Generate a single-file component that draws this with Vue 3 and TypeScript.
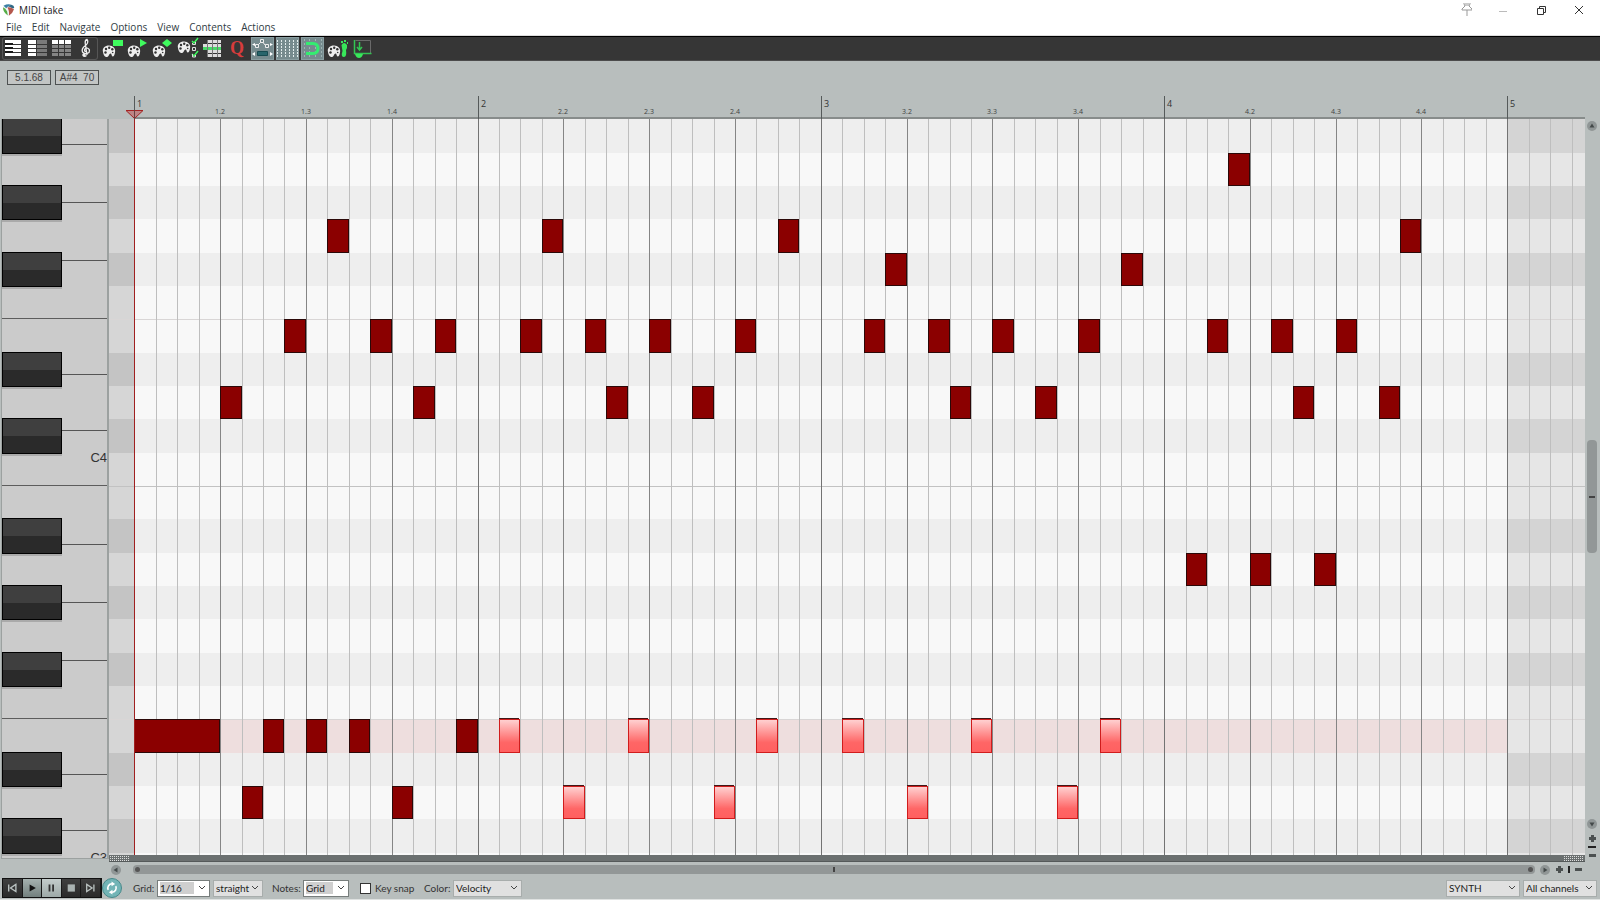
<script setup lang="ts">
import { ref } from 'vue'

interface Note { step: number; pitch: number; length: number; selected: boolean }
interface Key { pitch: number; top: number; height: number; black: boolean }

const menus = ['File', 'Edit', 'Navigate', 'Options', 'View', 'Contents', 'Actions']

/* Vertical scale: pitch 60 is C4, and its lower edge is the reference line. */
const C4_BOTTOM = 367
const edge = (pitch: number) => Math.round(C4_BOTTOM - ((pitch - 60) * 100) / 3)
const isBlack = (pitch: number) => [1, 3, 6, 8, 10].includes(pitch % 12)

const rows: Key[] = []
for (let pitch = 70; pitch >= 48; pitch--) {
  rows.push({ pitch, top: edge(pitch + 1), height: edge(pitch) - edge(pitch + 1), black: isBlack(pitch) })
}
const blackKeys = rows.filter((r) => r.black)
const octaveLines = [65, 60, 53].map(edge)
const keyLines = [25, 83, 141, 255, 311, 425, 483, 541, 655, 711]

/* Horizontal scale: one step is a sixteenth. */
const ORIGIN = 25
const stepX = (step: number) => ORIGIN + Math.round((step * 1373) / 64 + 0.3)
const END = stepX(64)
const gridSteps = Array.from({ length: 160 }, (_, i) => i + 1)
const lineClass = (s: number) => (s % 16 === 0 ? 'bar' : s % 4 === 0 ? 'beat' : 'sixteenth')
const bars = Array.from({ length: 5 }, (_, i) => i)
const beats = Array.from({ length: 16 }, (_, i) => i).filter((i) => i % 4 !== 0)

const make = (pitch: number, steps: number[], selected = false, length = 1): Note[] =>
  steps.map((step) => ({ step, pitch, length, selected }))

const notes: Note[] = [
  ...make(69, [51]),
  ...make(67, [9, 19, 30, 59]),
  ...make(66, [35, 46]),
  ...make(64, [7, 11, 14, 18, 21, 24, 28, 34, 37, 40, 44, 50, 53, 56]),
  ...make(62, [4, 13, 22, 26, 38, 42, 54, 58]),
  ...make(57, [49, 52, 55]),
  ...make(52, [0], false, 4),
  ...make(52, [6, 8, 10, 15]),
  ...make(52, [17, 23, 29, 33, 39, 45], true),
  ...make(50, [5, 12]),
  ...make(50, [20, 27, 36, 43], true),
]

const tools = [
  { id: 'piano', label: 'Piano roll view' },
  { id: 'named', label: 'Named notes view' },
  { id: 'events', label: 'Event list view' },
  { id: 'notation', label: 'Notation view' },
  { id: 'colorRect', label: 'Rectangle notes' },
  { id: 'colorTri', label: 'Triangle notes' },
  { id: 'colorDia', label: 'Diamond notes' },
  { id: 'filter', label: 'Filter events' },
  { id: 'tracks', label: 'Track list' },
  { id: 'quantize', label: 'Quantize' },
  { id: 'cc', label: 'CC selection follows notes' },
  { id: 'grid', label: 'Show grid' },
  { id: 'snap', label: 'Snap to grid' },
  { id: 'step', label: 'Step input' },
  { id: 'dock', label: 'Dock editor' },
]
const views = tools.slice(0, 4)
const actions = tools.slice(4)
const active = ref<string[]>(['cc', 'grid', 'snap'])
const toggle = (id: string) => {
  active.value = active.value.includes(id) ? active.value.filter((a) => a !== id) : [...active.value, id]
}
const keySnap = ref(false)
</script>

<template>
  <div class="window">
    <header class="titlebar">
      <svg class="logo" viewBox="0 0 14 14" aria-hidden="true">
        <path d="M7 .5 12.5 2.5 13 6 7 13.5 1 6 1.5 2.5Z" fill="#f2f5f5" />
        <path d="M1.600 2.300Q6 .2 10 1.300Q6 2.600 4.600 5Z" fill="#3a7fa5" />
        <path d="M10 1.300Q13 2 13.200 4.200Q12.600 5.400 11 5.200Q8.500 3.400 6.300 3Z" fill="#2e6886" />
        <path d="M1 4Q4 5 5.500 8.500L6.300 13Q1.200 9.500 1 4Z" fill="#55ad46" />
        <path d="M5.800 4.300Q9 3.400 12.900 6.300Q11.500 11 7.400 13.300Q8.200 7.800 5.800 4.300Z" fill="#b4574d" />
      </svg>
      <h1>MIDI take</h1>
      <div class="controls">
        <button aria-label="Pin">
          <svg viewBox="-2 2 14 14"><path d="M4 0v3l1 2-3 3v1h10V8L9 5l1-2V0M7 9v6M6 0v5M8 0v5" fill="none" stroke="#999" /></svg>
        </button>
        <button aria-label="Minimize">
          <svg viewBox="0 0 14 14"><path d="M3 7.500h8" stroke="#bbb" fill="none" /></svg>
        </button>
        <button aria-label="Restore">
          <svg viewBox="0 0 14 14"><path d="M3.500 4.500h6v6h-6zM5.500 4V2.500h6v6H10" fill="none" stroke="#333" /></svg>
        </button>
        <button aria-label="Close">
          <svg viewBox="0 0 14 14"><path d="m3 2 8 8m0-8-8 8" fill="none" stroke="#333" /></svg>
        </button>
      </div>
    </header>

    <nav class="menubar">
      <button v-for="m in menus" :key="m">{{ m }}</button>
    </nav>

    <div class="toolbar" role="toolbar">
      <div v-for="(set, g) in [views, actions]" :key="g" :class="g === 0 ? 'views' : 'actions'">
        <button
          v-for="t in set"
          :key="t.id"
          :aria-label="t.label"
          :class="{ active: active.includes(t.id) }"
          @click="toggle(t.id)"
        >
          <svg viewBox="0 0 23 23" aria-hidden="true">
            <g v-if="t.id === 'piano'">
              <path d="M3 3h16v4H3zM3 8h16v3H3zM3 12h16v3H3zM3 16h16v3H3z" fill="#fff" />
              <path d="M3 6h8v2H3zM3 10h8v2H3zM3 14h8v2H3z" fill="#181818" />
            </g>
            <g v-else-if="t.id === 'named'">
              <path d="M2 3h8v4H2zM2 8h8v3H2zM2 12h8v3H2zM2 16h8v3H2z" fill="#fff" />
              <path d="M11 3h10v4H11zM11 8h10v3H11zM11 12h10v3H11zM11 16h10v3H11z" fill="#7a7a7a" />
            </g>
            <g v-else-if="t.id === 'events'">
              <path d="M2 3h6v4H2zM9 3h5v4H9zM15 3h6v4h-6z" fill="#fff" />
              <path d="M2 8h6v3H2zM9 8h5v3H9zM15 8h6v3h-6zM2 12h6v3H2zM9 12h5v3H9zM15 12h6v3h-6zM2 16h6v3H2zM9 16h5v3H9zM15 16h6v3h-6z" fill="#858585" />
            </g>
            <g v-else-if="t.id === 'notation'" fill="none" stroke="#eee" stroke-width="1.300">
              <path d="M12.500 18.500Q10 20.500 9 17.500M13 18 11.200 6Q11 3 13 2.500Q15 5 12 8Q7 11.500 8.500 15Q11 18 15 15.500Q16.500 12 13 11Q10 11.300 10.700 14L12.500 15" />
              <circle cx="10" cy="18" r="1" fill="#eee" />
            </g>
            <g v-else-if="['colorRect', 'colorTri', 'colorDia', 'step', 'filter'].includes(t.id)">
              <g :class="{ raised: t.id === 'filter' }">
                <path d="M2 15C1 11 4 8.500 8 8.500s7 3 6 7c-.5 3-1.500 4.500-2.500 4-1.500-1-.5-3-2-3s-1.500 4-4.500 3.500C3 19.500 2.300 17 2 15Z" fill="#eee" />
                <g fill="#333">
                  <circle cx="5" cy="12" r="1.200" /><circle cx="8.200" cy="10.700" r="1.200" />
                  <circle cx="11.300" cy="12.300" r="1.200" /><circle cx="4.500" cy="15.500" r="1.200" />
                  <circle cx="11.700" cy="15.500" r=".8" />
                </g>
              </g>
              <path v-if="t.id === 'colorRect'" d="M12 3h10v6H12z" fill="#3ffb5e" />
              <path v-if="t.id === 'colorTri'" d="m14 2 7 4-7 4z" fill="#3ffb5e" />
              <path v-if="t.id === 'colorDia'" d="m11 6 5-4 5 4-5 4z" fill="#3ffb5e" />
              <path v-if="t.id === 'step'" d="M15.500 8q2.500-4 5.500 0 .5 3-1 5 1 7-2 7-3.500 0-1.500-6zM15 4h2v2h-2zM18 3h2v2h-2zM21 5h1v2h-1z" fill="#38e65a" />
              <g v-if="t.id === 'filter'" fill="none">
                <path d="m16 4 2 2 4-5m-6 16 2 2 4-5" stroke="#3ffb5e" stroke-width="1.500" />
                <path d="M16.500 6v1.500h3V5M16.500 10.500h3v3h-3zM16.500 17v3h3v-2" stroke="#ddd" />
              </g>
            </g>
            <g v-else-if="t.id === 'tracks'">
              <path d="M6 3h14v3H6zM2 7h18v3H2zM6 13h14v3H6zM6 17h14v3H6z" fill="#ddd" />
              <path d="M2 10h18v3H2z" fill="#49d968" />
              <path d="M6.500 3v17M11.500 3v17M16.500 3v17" stroke="#777" fill="none" />
            </g>
            <text v-else-if="t.id === 'quantize'" x="11" y="17" class="q">Q</text>
            <g v-else-if="t.id === 'cc'" fill="none">
              <path d="m6 9 5-5 3 4 4 1" stroke="#eee" />
              <path d="M4.500 7.500h3v3h-3zM9.500 2.500h3v3h-3zM14.500 7.500h3v3h-3z" fill="#71868a" stroke="#eee" />
              <path d="M4 6 1 7.500 4 9zm15 0 3 1.500L19 9zM4 15l-3 2 3 2zm15 0 3 2-3 2z" fill="#fff" />
              <path d="M6.500 14.500h10v4h-10z" fill="#28656b" stroke="#174b50" />
            </g>
            <path v-else-if="t.id === 'grid'" d="M1.500 3v17M5.500 3v17M9.500 3v17M13.500 3v17M17.500 3v17M21.500 3v17" stroke="#e2ecec" stroke-dasharray="2 1" />
            <g v-else-if="t.id === 'snap'" fill="none">
              <path d="M3.500 2v18M8.500 2v18M14.500 2v18M20.500 2v18" stroke="#9fb4b4" stroke-dasharray="2 2" />
              <path d="M5 6.500h7q5 0 5 5t-5 5H5" stroke="#34ec71" stroke-width="3" />
            </g>
            <g v-else-if="t.id === 'dock'" fill="none">
              <path d="M4.500 3.500h15v13" stroke="#6a6a6a" />
              <path d="M3.500 3v13.500h17M8.500 5v8M6 10l2.500 3 2.500-3" stroke="#32c552" stroke-width="1.500" />
              <path d="M4 17h8q-1 4-4 4t-4-4Z" fill="#38e65a" />
            </g>
          </svg>
        </button>
      </div>
    </div>

    <main class="editor">
      <div class="readouts">
        <output>5.1.68</output>
        <output>A#4&nbsp; 70</output>
      </div>

      <svg class="ruler" aria-label="Timeline">
        <rect :x="ORIGIN" y="56" width="100%" height="2" fill="#878c8b" />
        <g v-for="b in bars" :key="'b' + b">
          <rect :x="stepX(b * 16)" y="35" width="1" height="23" fill="#555a5a" />
          <text :x="stepX(b * 16) + 3" y="46" class="bar-label">{{ b + 1 }}</text>
        </g>
        <text v-for="b in beats" :key="'t' + b" :x="stepX(b * 4)" y="53" class="beat-label">
          {{ Math.floor(b / 4) + 1 }}.{{ (b % 4) + 1 }}
        </text>
        <path :d="`M${ORIGIN - 8} 49.500h17l-8.500 8z`" fill="#bd8585" stroke="#a52222" />
        <path :d="`M${ORIGIN + 0.5} 49v9`" stroke="#684040" />
      </svg>

      <svg class="piano" aria-label="Keyboard">
        <rect v-for="y in octaveLines" :key="'o' + y" x="0" :y="y - 1" width="100%" height="1" fill="#5d5d5d" />
        <rect v-for="y in keyLines" :key="'l' + y" x="60" :y="y" width="100%" height="1" fill="#555" />
        <g v-for="k in blackKeys" :key="k.pitch">
          <rect x="0" :y="k.top + 1" width="60" :height="k.height + 2" fill="#aaa" />
          <rect x="0" :y="k.top - 1" width="60" :height="k.height + 2" fill="#000" />
          <rect x="1" :y="k.top" width="58" height="17" fill="#3f3f3f" />
          <rect x="1" :y="k.top + 17" width="58" :height="k.height - 17" fill="#2a2a2a" />
        </g>
        <text x="105" y="343" class="key-label">C4</text>
        <text x="105" y="743" class="key-label">C3</text>
      </svg>

      <div class="roll-column">
        <svg class="roll" aria-label="Notes">
          <defs>
            <linearGradient id="picked" x2="0" y2="1">
              <stop offset="0" stop-color="#ffd0d0" />
              <stop offset="0.700" stop-color="#ff6666" />
              <stop offset="1" stop-color="#ff6060" />
            </linearGradient>
          </defs>
          <g v-for="r in rows" :key="r.pitch">
            <rect x="0" :y="r.top" width="100%" :height="r.height" :fill="r.black ? '#c4c4c4' : '#d6d6d6'" />
            <rect :x="ORIGIN" :y="r.top" :width="END - ORIGIN" :height="r.height" :fill="r.pitch === 52 ? '#eedede' : r.black ? '#eeeeee' : '#f8f8f8'" />
            <rect :x="END" :y="r.top" width="100%" :height="r.height" :fill="r.black ? '#d4d4d4' : '#e6e6e6'" />
          </g>
          <rect
            v-for="(y, i) in octaveLines"
            :key="y"
            x="0"
            :y="y"
            width="100%"
            height="1"
            :fill="i === 1 ? '#c2c2c2' : '#d9d6d6'"
          />
          <rect v-for="s in gridSteps" :key="s" :x="stepX(s)" y="0" width="1" height="100%" :class="lineClass(s)" />
          <g v-for="n in notes" :key="n.pitch + '-' + n.step">
            <rect
              :x="stepX(n.step)"
              :y="edge(n.pitch + 1)"
              :width="stepX(n.step + n.length) - stepX(n.step)"
              :height="edge(n.pitch) - edge(n.pitch + 1)"
              :fill="n.selected ? '#d01c1c' : '#2b0808'"
            />
            <rect
              :x="stepX(n.step) + 1"
              :y="edge(n.pitch + 1) + 1"
              :width="stepX(n.step + n.length) - stepX(n.step) - 2"
              :height="edge(n.pitch) - edge(n.pitch + 1) - 2"
              :fill="n.selected ? 'url(#picked)' : '#8b0000'"
            />
            <rect
              v-if="n.selected"
              :x="stepX(n.step)"
              :y="edge(n.pitch + 1) - 1"
              :width="stepX(n.step + n.length) - stepX(n.step) - 1"
              height="1"
              fill="#401818"
            />
          </g>
          <rect :x="ORIGIN" y="0" width="1" height="100%" fill="#a02020" />
        </svg>
        <div class="lane-divider"><i></i><i></i></div>
      </div>

      <div class="vscroll">
        <button class="round" aria-label="Scroll up"><svg viewBox="0 0 10 10"><path d="m2.500 6.500 2.500-4 2.500 4z" /></svg></button>
        <div class="vtrack"><div class="vthumb"><i></i></div></div>
        <button class="round" aria-label="Scroll down"><svg viewBox="0 0 10 10"><path d="m2.500 3.500 2.500 4 2.500-4z" /></svg></button>
        <button class="zoom" aria-label="Zoom in vertically"><svg viewBox="0 0 9 9"><path d="M3 1h3v2h2v3H6v2H3V6H1V3h2z" /></svg></button>
        <i class="zoom-mark"></i>
        <button class="zoom" aria-label="Zoom out vertically"><svg viewBox="0 0 9 9"><path d="M1 3h7v3H1z" /></svg></button>
      </div>

      <div class="hscroll">
        <button class="round" aria-label="Scroll left"><svg viewBox="0 0 10 10"><path d="m6.500 2.500-4 2.500 4 2.500z" /></svg></button>
        <div class="htrack"><b></b><i></i><b></b></div>
        <button class="round" aria-label="Scroll right"><svg viewBox="0 0 10 10"><path d="m3.500 2.500 4 2.500-4 2.500z" /></svg></button>
        <button class="zoom" aria-label="Zoom in"><svg viewBox="0 0 9 9"><path d="M3 1h3v2h2v3H6v2H3V6H1V3h2z" /></svg></button>
        <i class="zoom-mark"></i>
        <button class="zoom" aria-label="Zoom out"><svg viewBox="0 0 9 9"><path d="M1 3h7v3H1z" /></svg></button>
      </div>
    </main>

    <footer class="transport">
      <div class="buttons">
        <button aria-label="Go to start"><svg viewBox="0 0 20 20"><path d="M6 6v8" stroke="#b8c0bf" stroke-width="1.500" /><path d="m14 6-6 4 6 4z" fill="none" stroke="#b8c0bf" stroke-width="1.500" /></svg></button>
        <button aria-label="Play" class="play"><svg viewBox="0 0 20 20"><path d="m7 6 7 4-7 4z" fill="#111" /></svg></button>
        <button aria-label="Pause" class="pause"><svg viewBox="0 0 20 20"><path d="M7 6h2v8H7zm4 0h2v8h-2z" fill="#333" /></svg></button>
        <button aria-label="Stop"><svg viewBox="0 0 20 20"><path d="M6 6h8v8H6z" fill="#a9b2b1" /></svg></button>
        <button aria-label="Go to end"><svg viewBox="0 0 20 20"><path d="M14 6v8" stroke="#b8c0bf" stroke-width="1.500" /><path d="m6 6 6 4-6 4z" fill="none" stroke="#b8c0bf" stroke-width="1.500" /></svg></button>
      </div>
      <button class="repeat" aria-label="Repeat">
        <svg viewBox="0 0 20 20"><g fill="none" stroke="#fff" stroke-width="1.800"><path d="M5.800 12A4.700 4.700 0 0 1 10 5.300M14.200 8A4.700 4.700 0 0 1 10 14.700" /></g><path d="m9.500 2.800 4 2.700-4 2.500zm1 9.200-4 2.700 4 2.500z" fill="#fff" /></svg>
      </button>

      <label for="grid-size">Grid:</label>
      <span class="combo editable size">
        <select id="grid-size"><option>1/16</option><option>1/8</option></select>
        <svg viewBox="0 0 8 6"><path d="m1 1 3 3 3-3" /></svg>
      </span>
      <span class="combo type">
        <select aria-label="Grid type"><option>straight</option><option>triplet</option></select>
        <svg viewBox="0 0 8 6"><path d="m1 1 3 3 3-3" /></svg>
      </span>
      <label for="note-size">Notes:</label>
      <span class="combo editable note">
        <select id="note-size"><option>Grid</option><option>1/16</option></select>
        <svg viewBox="0 0 8 6"><path d="m1 1 3 3 3-3" /></svg>
      </span>
      <input id="key-snap" v-model="keySnap" type="checkbox" />
      <label for="key-snap" class="snap-label">Key snap</label>
      <label for="note-color">Color:</label>
      <span class="combo color">
        <select id="note-color"><option>Velocity</option><option>Channel</option></select>
        <svg viewBox="0 0 8 6"><path d="m1 1 3 3 3-3" /></svg>
      </span>
      <span class="combo track">
        <select aria-label="Track"><option>SYNTH</option></select>
        <svg viewBox="0 0 8 6"><path d="m1 1 3 3 3-3" /></svg>
      </span>
      <span class="combo channel">
        <select aria-label="Channel"><option>All channels</option></select>
        <svg viewBox="0 0 8 6"><path d="m1 1 3 3 3-3" /></svg>
      </span>
    </footer>
  </div>
</template>

<style>
body { margin: 0; background: #b8bebd; }
</style>

<style scoped>
* { box-sizing: border-box; }
button { border: 0; padding: 0; margin: 0; background: none; font: inherit; color: inherit; }
svg { display: block; }
.window { display: flex; flex-direction: column; height: 100vh; overflow: hidden; background: #b8bebd; font: 10px "Open Sans", "Noto Sans", sans-serif; color: #333; }

.titlebar { display: flex; align-items: center; height: 19px; padding: 0 14px 0 2px; background: #fff; }
.logo { width: 13px; height: 14px; margin-right: 4px; }
h1 { margin: 0; font-size: 10px; line-height: 18px; font-weight: 400; color: #222; }
.controls { display: flex; gap: 24px; margin-left: auto; }
.controls svg { width: 14px; height: 14px; }
.controls button { height: 19px; padding-top: 2px; }
.controls button:first-child { padding-top: 0; }
.menubar { display: flex; gap: 10px; height: 17px; padding-left: 6px; background: #fff; border-bottom: 1px solid #ddd; }
.menubar button { line-height: 16px; color: #303c44; }

.toolbar { display: flex; height: 25px; padding-left: 2px; background: #363636; border-top: 1px solid #000; border-bottom: 1px solid #4c4c4c; }
.toolbar button { width: 23px; height: 23px; }
.toolbar svg { width: 23px; height: 23px; }
.toolbar button.active { background: #768b8e; box-shadow: inset 0 0 0 1px #899da0; }
.views { display: flex; gap: 1px; width: 96px; margin-right: 3px; border-radius: 3px; box-shadow: inset 0 0 0 1px #565656; }
.actions { display: flex; gap: 2px; }
.raised { transform: translate(0, -4px); }
.q { font: bold 18px "Liberation Serif", serif; fill: #d83c3c; text-anchor: middle; }

.editor { flex: 1; min-height: 0; display: grid; grid-template-columns: 109px 1fr 15px; grid-template-rows: 58px 1fr 15px; }
.readouts { grid-column: 1; display: flex; gap: 4px; align-self: start; padding: 9px 0 0 7px; }
.readouts output { width: 44px; height: 15px; border: 1px solid #4d5151; background: #c2c5c4; font: 10px/13px "Liberation Sans", sans-serif; text-align: center; white-space: pre; color: #444; }
.ruler { grid-column: 2; width: 100%; height: 58px; }
.bar-label { font: 9px "Open Sans", sans-serif; fill: #333; }
.beat-label { font: 7px "Open Sans", sans-serif; fill: #3d4343; text-anchor: middle; }
.piano { grid-column: 1; grid-row: 2; width: 108px; height: calc(100% - 3px); min-height: 0; margin-left: 1px; background: #cbcbcb; border: solid #9ca1a0; border-width: 0 2px 1px 1px; }
.key-label { font: 13px "Liberation Sans", sans-serif; fill: #333; text-anchor: end; }
.roll-column { grid-column: 2; grid-row: 2; display: flex; flex-direction: column; min-width: 0; min-height: 0; }
.roll { flex: 1; width: 100%; min-height: 0; }
.sixteenth { fill: #bebebe; }
.beat { fill: #858585; }
.bar { fill: #737373; }
.lane-divider { display: flex; justify-content: space-between; align-items: center; height: 7px; padding: 0 1px; background: #6b7070; border-bottom: 1px solid #555a5a; }
.lane-divider i { width: 20px; height: 5px; background: repeating-linear-gradient(90deg, transparent 0 1px, #6b7070 1px 2px), repeating-linear-gradient(#ddd 0 1px, #6b7070 1px 2px); }

.vscroll { grid-column: 3; grid-row: 2 / 4; display: flex; flex-direction: column; align-items: center; padding: 2px 1px 17px 0; }
.round { flex: none; width: 10px; height: 10px; border-radius: 50%; background: #909696; }
.round svg { width: 10px; height: 10px; fill: #444a4a; }
.vtrack { flex: 1; width: 10px; padding: 309px 0 0; }
.vthumb { display: grid; place-items: center; height: 113px; border-radius: 4px; background: #929797; }
.vthumb i { width: 6px; height: 2px; background: #444; }
.zoom { flex: none; width: 9px; height: 9px; }
.zoom svg { width: 9px; height: 9px; fill: #4b5050; }
.vscroll .zoom:nth-of-type(3) { margin-top: 5px; }
.vscroll .zoom-mark { flex: none; width: 8px; height: 2px; margin: 3px 0; background: #222; }

.hscroll { grid-column: 2 / 4; grid-row: 3; display: flex; align-items: center; margin-right: 17px; padding-left: 2px; }
.htrack { flex: 1; display: flex; justify-content: space-between; align-items: center; height: 9px; margin: 0 5px 0 12px; padding: 0 2px; border-radius: 4px; background: #929797; }
.htrack b { width: 5px; height: 5px; border-radius: 50%; background: #555; }
.htrack i { width: 2px; height: 5px; background: #444; }
.hscroll .zoom:nth-of-type(3) { margin-left: 5px; }
.hscroll .zoom-mark { width: 2px; height: 7px; margin: 0 4px; background: #222; }

.transport { display: flex; align-items: center; height: 23px; padding: 0 3px 0 2px; font-family: Lato, "Open Sans", sans-serif; border-bottom: 1px solid #dfe2e1; }
.buttons { display: flex; width: 100px; height: 20px; border: 1px solid #111; }
.buttons button { flex: 1; height: 18px; background: linear-gradient(#3f3f3f, #2b2b2b); border-right: 1px solid #181818; }
.buttons svg { width: 100%; height: 18px; }
.buttons .play { background: linear-gradient(#a5b1af, #73807e); }
.buttons .pause { background: linear-gradient(#c3cccb, #9eaaa8); }
.repeat { width: 20px; height: 20px; border: 1px solid #47898a; border-radius: 50%; background: #72b4b6; }
.repeat svg { width: 18px; height: 18px; }
.transport label { width: 31px; margin-left: 9px; color: #333; }
.repeat + label { width: 24px; margin-left: 11px; }
.transport .snap-label { width: 36px; margin-left: 4px; white-space: nowrap; }
.transport .snap-label + label { width: 29px; margin-left: 13px; }
.combo { display: grid; grid-template-columns: 1fr 8px; align-items: center; height: 17px; padding-right: 3px; border: 1px solid #a8adac; background: #e0e0e0; }
.combo select { grid-area: 1 / 1 / 2 / 3; width: 100%; height: 15px; padding: 0 0 0 2px; border: 0; appearance: none; background: transparent; font: inherit; color: #222; }
.combo svg { grid-area: 1 / 2 / 2 / 3; width: 8px; height: 6px; fill: none; stroke: #444; pointer-events: none; }
.editable { background: #fff; border-color: #777d7c; }
.editable select { background: linear-gradient(#cfcfcf, #cfcfcf) 2px 1px / calc(100% - 14px) 12px no-repeat; }
.size { width: 53px; }
.type { width: 50px; margin-left: 3px; }
.note { width: 46px; }
.color { width: 69px; }
.track { width: 74px; margin-left: auto; }
.channel { width: 74px; margin-left: 3px; }
input[type="checkbox"] { appearance: none; width: 11px; height: 11px; margin: 0 0 0 11px; border: 1px solid #333; background: #fff; }
input[type="checkbox"]:checked { background: #555; }
</style>
